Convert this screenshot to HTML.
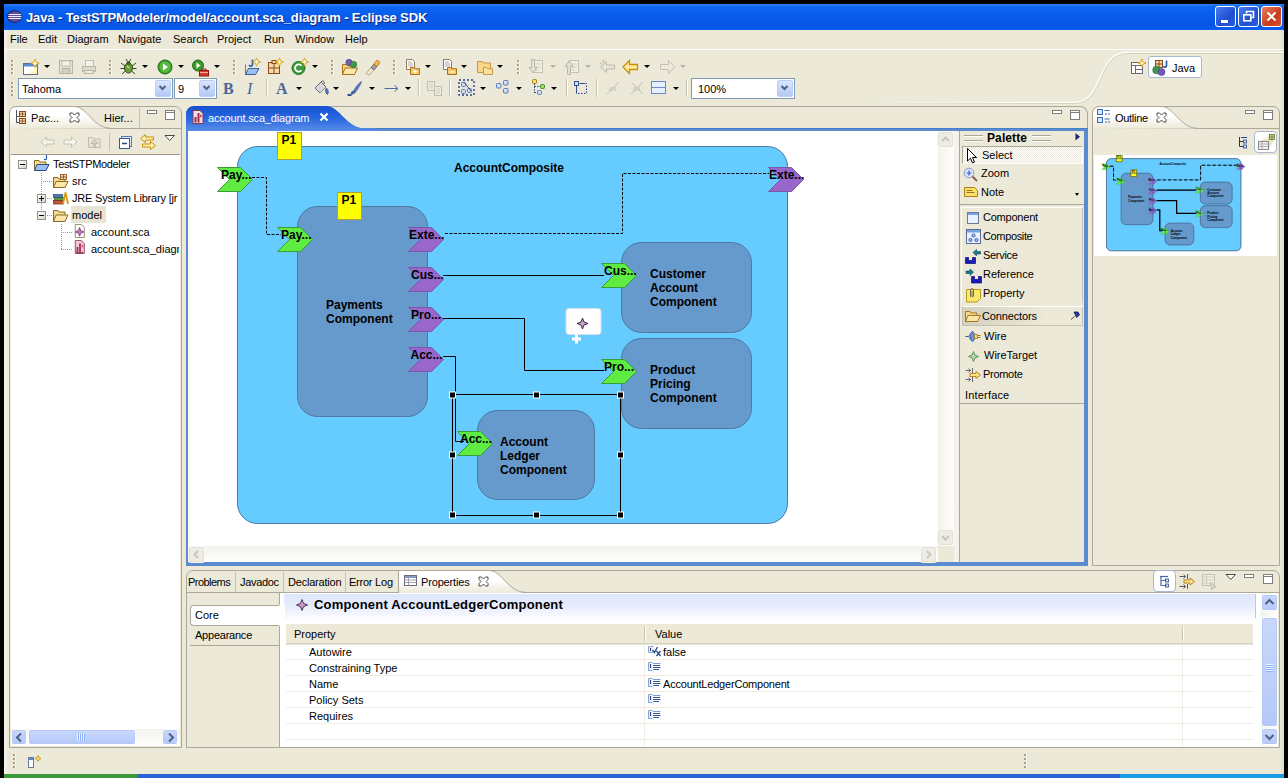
<!DOCTYPE html>
<html>
<head>
<meta charset="utf-8">
<title>Java - Eclipse SDK</title>
<style>
*{box-sizing:border-box;margin:0;padding:0}
html,body{width:1288px;height:778px;overflow:hidden;background:#000}
body{position:relative;font-family:"Liberation Sans",sans-serif;font-size:11px;color:#000}
.abs{position:absolute}
#win{position:absolute;left:4px;top:4px;width:1280px;height:770px;background:#ece9d8}
#title{position:absolute;left:0;top:0;width:1280px;height:26px;background:linear-gradient(#2f80f6 0,#0d66f2 12%,#085cec 45%,#0656e4 80%,#0a5ef0 100%)}
#title .txt{position:absolute;left:22px;top:6px;letter-spacing:-0.11px;font-weight:bold;font-size:13px;color:#fff;white-space:nowrap;text-shadow:1px 1px 0 #0a2a80}
.wb{position:absolute;top:2px;width:21px;height:21px;border:1px solid #fff;border-radius:3px;background:linear-gradient(135deg,#4a7ef0,#1f4fd0 60%,#2a5ce0)}
.wb.c{background:linear-gradient(135deg,#e8825e,#c93a1c 60%,#d9502c)}
#menu{position:absolute;left:0;top:26px;width:1280px;height:20px}
#menu span{position:absolute;top:3px;font-size:11px;white-space:nowrap}
.t{position:absolute;white-space:nowrap;font-size:11px;line-height:13px}
</style>
</head>
<body>
<div id="win">
  <div id="title">
    <svg class="abs" style="left:3px;top:6px" width="15" height="13" viewBox="0 0 15 13"><ellipse cx="7.500" cy="6.500" rx="7" ry="6" fill="#3a3478" stroke="#1a1a50" stroke-width=".8"/><ellipse cx="8" cy="6.500" rx="6" ry="5.300" fill="#5a50a0"/><path d="M1.500 4.500h12.500M1 6.500h13.500M1.500 8.500h12.500" stroke="#f0ecfa" stroke-width="1.100"/></svg>
    <div class="txt">Java - TestSTPModeler/model/account.sca_diagram - Eclipse SDK</div>
    <div class="wb" style="left:1211px"><div class="abs" style="left:5px;top:13px;width:7px;height:3px;background:#fff"></div></div>
    <div class="wb" style="left:1234px"><svg class="abs" style="left:3px;top:3px" width="13" height="13"><path d="M4.5 3.5v-2h7v6h-2" fill="none" stroke="#fff" stroke-width="1.6"/><rect x="1.8" y="4.8" width="7" height="6" fill="none" stroke="#fff" stroke-width="1.6"/></svg></div>
    <div class="wb c" style="left:1257px"><svg class="abs" style="left:3px;top:3px" width="13" height="13"><path d="M2.5 2.5l8 8M10.5 2.5l-8 8" stroke="#fff" stroke-width="2"/></svg></div>
  </div>
  <div class="abs" style="left:0;top:26px;width:3px;height:744px;background:#f3f1e6"></div><div class="abs" style="left:1277px;top:26px;width:3px;height:744px;background:#e3dfce"></div>
  <div id="menu">
    <span style="left:6px">File</span><span style="left:34px">Edit</span><span style="left:63px">Diagram</span><span style="left:114px">Navigate</span><span style="left:169px">Search</span><span style="left:213px">Project</span><span style="left:260px">Run</span><span style="left:291px">Window</span><span style="left:341px">Help</span>
  </div>

  <!-- perspective curve + coolbar lines -->
  <svg class="abs" style="left:0;top:44px" width="1280" height="60" viewBox="0 0 1280 60">
    <defs><linearGradient id="fade" gradientUnits="userSpaceOnUse" x1="860" y1="0" x2="1040" y2="0"><stop offset="0" stop-color="#fff" stop-opacity="0"/><stop offset="1" stop-color="#fff" stop-opacity="1"/></linearGradient>
    <linearGradient id="fade2" gradientUnits="userSpaceOnUse" x1="860" y1="0" x2="1040" y2="0"><stop offset="0" stop-color="#d8d2bd" stop-opacity="0"/><stop offset="1" stop-color="#d8d2bd" stop-opacity="1"/></linearGradient></defs>
    <path d="M0 1.500H1280" stroke="#fff" stroke-width="1" opacity=".85"/>
    <path d="M860 54.500H1070C1100 54.500 1092 4.500 1122 4.500H1280" fill="none" stroke="url(#fade)" stroke-width="1.300"/>
    <path d="M860 55.500H1071C1101 55.500 1093 5.500 1123 5.500H1280" fill="none" stroke="url(#fade2)" stroke-width="1"/>
  </svg>
  <style>
    .grip{position:absolute;width:3px;height:15px;background:linear-gradient(90deg,#a5a28f 0,#a5a28f 2px,#fff 2px) ;-webkit-mask:repeating-linear-gradient(#000 0,#000 2px,transparent 2px,transparent 4px);mask:repeating-linear-gradient(#000 0,#000 2px,transparent 2px,transparent 4px)}
    .dd{position:absolute;width:0;height:0;border-left:3px solid transparent;border-right:3px solid transparent;border-top:3px solid #000}
    .dd.dis{border-top-color:#b5b2a0}
    .sep{position:absolute;width:1px;height:18px;background:#c5c2b2;box-shadow:1px 0 0 #fff}
    .combo{position:absolute;height:21px;background:#fff;border:1px solid #7f9db9}
    .combo .btn{position:absolute;right:1px;top:1px;width:16px;height:17px;border-radius:2px;background:linear-gradient(#dbe6fd,#b4c8f6);border:1px solid #b8cdf8}
    .combo .txt{position:absolute;left:3px;top:4px;font-size:11px}
  </style>
  <div id="tb1">
    <div class="grip" style="left:7px;top:56px"></div>
    <!-- new -->
    <svg class="abs" style="left:18px;top:55px" width="18" height="17"><defs><linearGradient id="ny" x1="0" y1="0" x2="1" y2="1"><stop offset=".5" stop-color="#fff"/><stop offset="1" stop-color="#ffe88a"/></linearGradient></defs><rect x="1.500" y="4.500" width="14" height="11" fill="url(#ny)" stroke="#5a6f9c"/><rect x="2" y="5" width="13" height="2.500" fill="#5a8ad8"/><path d="M13 0l1.200 3 3 1.200-3 1.200L13 8.500l-1.200-3.100-3-1.200 3-1.200z" fill="#fffbd0" stroke="#d8a010" stroke-width=".9"/></svg>
    <div class="dd" style="left:40px;top:61px"></div>
    <!-- save disabled -->
    <svg class="abs" style="left:54px;top:55px" width="16" height="16"><rect x="1.5" y="1.5" width="13" height="13" fill="#e2dfd0" stroke="#b9b6a6"/><rect x="4" y="2" width="8" height="5" fill="#f4f2ea" stroke="#c4c1b2"/><rect x="4.5" y="9.5" width="7" height="5" fill="#d2cfc0" stroke="#b9b6a6"/></svg>
    <svg class="abs" style="left:77px;top:55px" width="16" height="16"><rect x="4.5" y="1.5" width="8" height="6" fill="#f4f2ea" stroke="#c0bdae"/><rect x="1.5" y="7.5" width="13" height="5" fill="#dedbcc" stroke="#b9b6a6"/><rect x="3.5" y="11.5" width="9" height="3" fill="#ece9d8" stroke="#b9b6a6"/></svg>
    <div class="grip" style="left:105px;top:56px"></div>
    <!-- debug -->
    <svg class="abs" style="left:116px;top:54px" width="17" height="18"><ellipse cx="8.5" cy="10" rx="4" ry="5" fill="#6a9a3a" stroke="#2f4d1a"/><circle cx="8.5" cy="5" r="2" fill="#3e5e22"/><path d="M1 5l4 3M16 5l-4 3M0.5 10.5h4M16.5 10.500h-4M2 16l3.500-3M15 16l-3.500-3M6 1l1.500 2.500M11 1L9.500 3.500" stroke="#2f4d1a" stroke-width="1" fill="none"/><path d="M7 8l2 2" stroke="#c8e89a" stroke-width="1.2"/></svg>
    <div class="dd" style="left:138px;top:61px"></div>
    <!-- run -->
    <svg class="abs" style="left:153px;top:55px" width="16" height="16"><circle cx="8" cy="8" r="7" fill="#3c9a2c" stroke="#1f6a18"/><circle cx="8" cy="8" r="5.500" fill="#58b840"/><path d="M6 4.500l5 3.500-5 3.500z" fill="#fff"/></svg>
    <div class="dd" style="left:174px;top:61px"></div>
    <!-- ext tools -->
    <svg class="abs" style="left:187px;top:54px" width="20" height="20"><circle cx="7" cy="7.500" r="5.500" fill="#3c9a2c" stroke="#1f6a18"/><path d="M5.500 4.500l4 3-4 3z" fill="#fff"/><rect x="8.500" y="12.500" width="9" height="5.500" fill="#d83a2a" stroke="#8a1a10"/><path d="M11 12.500v-1.500h4v1.500" stroke="#8a1a10" fill="none"/><rect x="9" y="14" width="8" height="1" fill="#f4b0a0"/></svg>
    <div class="dd" style="left:210px;top:61px"></div>
    <div class="grip" style="left:229px;top:56px"></div>
    <!-- new java project -->
    <svg class="abs" style="left:239px;top:54px" width="18" height="18"><path d="M2.500 6.500v9.500h9" fill="none" stroke="#5a7ab8"/><path d="M2.500 16.500l3-6h10.500l-3.500 6z" fill="#9cc0f0" stroke="#3f5f9a"/><path d="M9.500 1.500v5c0 2-3 2-3.300.3" fill="none" stroke="#2a5aa8" stroke-width="1.700"/><path d="M13.500 0l1.100 2.900 2.900 1.100-2.900 1.100-1.100 2.900-1.100-2.900-2.900-1.100 2.900-1.100z" fill="#fffbd0" stroke="#d8a010" stroke-width=".9"/></svg>
    <svg class="abs" style="left:262px;top:54px" width="18" height="18"><rect x="2.500" y="4.500" width="11" height="11" fill="#f6d9a8" stroke="#8a4a1a"/><path d="M2.500 10h11M8 4.500v11" stroke="#8a4a1a"/><rect x="6" y="2.500" width="4" height="3" fill="#f6d9a8" stroke="#8a4a1a"/><path d="M13.500 0l1.100 2.900 2.900 1.100-2.900 1.100-1.100 2.900-1.100-2.900-2.900-1.100 2.900-1.100z" fill="#fffbd0" stroke="#d8a010" stroke-width=".9"/></svg>
    <svg class="abs" style="left:287px;top:54px" width="18" height="18"><circle cx="7.500" cy="10" r="6.500" fill="#3c9a3c" stroke="#1f6a22"/><path d="M10.500 7.800a3.600 3.600 0 1 0 0 4.400" fill="none" stroke="#fff" stroke-width="1.800"/><path d="M13.500 0l1.100 2.900 2.900 1.100-2.900 1.100-1.100 2.900-1.100-2.900-2.900-1.100 2.900-1.100z" fill="#fffbd0" stroke="#d8a010" stroke-width=".9"/></svg>
    <div class="dd" style="left:308px;top:61px"></div>
    <div class="grip" style="left:327px;top:56px"></div>
    <!-- open type -->
    <svg class="abs" style="left:337px;top:54px" width="18" height="18"><path d="M1.500 6.500h5l1 1.500h6v8.500h-12z" fill="#f8d68a" stroke="#a8741a"/><path d="M1.500 16.500l2.500-6.500h12.500l-3 6.500z" fill="#fbe6a8" stroke="#a8741a"/><circle cx="8" cy="4.500" r="3.200" fill="#7a5ab8" stroke="#4a3a88" stroke-width=".6"/><circle cx="12.500" cy="6.500" r="3.200" fill="#3c9a4c" stroke="#1f6a2a" stroke-width=".6"/></svg>
    <svg class="abs" style="left:360px;top:54px" width="18" height="18"><path d="M2 15.500l5-6 3 2.500-5 5z" fill="#f4ead0" stroke="#a89868" stroke-width=".8"/><path d="M7 9.500l3-3.500 3 2.500-3 3.500z" fill="#a0a0a8" stroke="#606068" stroke-width=".8"/><path d="M10 6l2.500-3.500c1-1 4 1.500 3 3L13 8.500z" fill="#f4b848" stroke="#a8741a" stroke-width=".8"/></svg>
    <div class="grip" style="left:389px;top:56px"></div>
    <svg class="abs" style="left:400px;top:54px" width="18" height="18"><path d="M2.500 1.500h6l2 2v8h-8z" fill="#fff" stroke="#8a7a58"/><path d="M4 4h4M4 6h5M4 8h5" stroke="#9a90a0" stroke-width=".8"/><path d="M6.500 9.500h3l1 1.200h5v5.800h-9z" fill="#f8c868" stroke="#a8741a"/><path d="M9 13.500h4M11 11.500v4" stroke="#fff" stroke-width="1.200"/></svg>
    <div class="dd" style="left:421px;top:61px"></div>
    <svg class="abs" style="left:437px;top:54px" width="18" height="18"><path d="M2.500 1.500h6l2 2v8h-8z" fill="#fff" stroke="#8a7a58"/><path d="M4 4h4M4 6h5M4 8h5" stroke="#9a90a0" stroke-width=".8"/><path d="M6.500 9.500h3l1 1.200h5v5.800h-9z" fill="#f8c868" stroke="#a8741a"/><path d="M8.500 14h5" stroke="#fff" stroke-width="1.200"/></svg>
    <div class="dd" style="left:457px;top:61px"></div>
    <svg class="abs" style="left:472px;top:54px" width="18" height="18"><path d="M1.500 3.500h5l1 1.500h7v9.500h-13z" fill="#f8d68a" stroke="#c8983a"/><path d="M7.500 9.500h3l1 1.200h5v5.800h-9z" fill="#fbe0a0" stroke="#c8983a"/></svg>
    <div class="dd" style="left:493px;top:61px"></div>
    <div class="grip" style="left:513px;top:56px"></div>
    <!-- disabled next/prev annotation -->
    <svg class="abs" style="left:524px;top:54px" width="17" height="18"><rect x="5.500" y="2.500" width="9" height="12" fill="#f2f0e6" stroke="#c4c1b2"/><path d="M7 6h6M7 9h6M7 12h4" stroke="#d0cdbf"/><path d="M3.500 1.500h3v8h2.500l-4 5.500-4-5.500h2.500z" fill="#e4e1d2" stroke="#bcb9a9"/></svg>
    <div class="dd dis" style="left:546px;top:61px"></div>
    <svg class="abs" style="left:560px;top:54px" width="17" height="18"><rect x="5.500" y="2.500" width="9" height="12" fill="#f2f0e6" stroke="#c4c1b2"/><path d="M7 6h6M7 9h6M7 12h4" stroke="#d0cdbf"/><path d="M3.500 16.500h3v-8h2.500l-4-5.500-4 5.500h2.500z" fill="#e4e1d2" stroke="#bcb9a9"/></svg>
    <div class="dd dis" style="left:581px;top:61px"></div>
    <svg class="abs" style="left:595px;top:55px" width="17" height="16"><path d="M7.500 2.500l-6 5.500 6 5.500v-3.500h8v-4h-8z" fill="#e8e5d6" stroke="#bcb9a9"/><path d="M3 2l1.500 2M5 0.500v2.500M1 4l2 1" stroke="#bcb9a9"/></svg>
    <svg class="abs" style="left:618px;top:55px" width="17" height="16"><path d="M7.500 1.500l-6.500 6.500 6.500 6.500v-4h8v-5h-8z" fill="#ffe89a" stroke="#c8900a" stroke-width="1.300"/></svg>
    <div class="dd" style="left:640px;top:61px"></div>
    <svg class="abs" style="left:655px;top:55px" width="17" height="16"><path d="M9.500 1.500l6.500 6.500-6.500 6.500v-4h-8v-5h8z" fill="#ebe8da" stroke="#c4c1b2"/></svg>
    <div class="dd dis" style="left:676px;top:61px"></div>
  </div>

  <div id="tb2" class="abs" style="left:0;top:0px">
    <div class="grip" style="left:7px;top:78px"></div>
    <div class="combo" style="left:14px;top:74px;width:155px"><div class="txt">Tahoma</div><div class="btn"><svg width="13" height="14" class="abs" style="left:0;top:0"><path d="M3.500 5l3 3 3-3" fill="none" stroke="#4d6185" stroke-width="2"/></svg></div></div>
    <div class="combo" style="left:170px;top:74px;width:43px"><div class="txt">9</div><div class="btn"><svg width="13" height="14" class="abs" style="left:0;top:0"><path d="M3.500 5l3 3 3-3" fill="none" stroke="#4d6185" stroke-width="2"/></svg></div></div>
    <div class="abs" style="left:219px;top:76px;font-family:'Liberation Serif',serif;font-weight:bold;font-size:16px;color:#4a6596;line-height:18px">B</div>
    <div class="abs" style="left:243px;top:76px;font-family:'Liberation Serif',serif;font-style:italic;font-size:16px;color:#4a6596;line-height:18px">I</div>
    <div class="sep" style="left:262px;top:75px"></div>
    <div class="abs" style="left:272px;top:76px;font-family:'Liberation Serif',serif;font-weight:bold;font-size:16px;color:#4a6596;line-height:18px">A</div>
    <div class="dd" style="left:292px;top:83px"></div>
    <!-- bucket -->
    <svg class="abs" style="left:309px;top:76px" width="17" height="17"><g transform="translate(17 0) scale(-1 1)"><path d="M4 7l5-5 6 6-5 5z" fill="#d8d8dc" stroke="#5a5a62" stroke-width=".9"/><path d="M4 7l6 6" stroke="#8a8a92"/><path d="M3.500 8c-2 2-2.500 5-1 6.500 1.500-.5 2-3 2-5z" fill="#4a78c8" stroke="#2a4888" stroke-width=".6"/><path d="M9 2c-1.500-2 -4 -1 -3 2" fill="none" stroke="#5a5a62"/></g></svg>
    <div class="dd" style="left:329px;top:83px"></div>
    <!-- brush -->
    <svg class="abs" style="left:343px;top:76px" width="17" height="17"><path d="M14.500 1.500c-3 2-6 5.500-7.500 9l2 1c2-3 4.500-6.500 5.500-10z" fill="#5a80c8" stroke="#34508a" stroke-width=".7"/><path d="M7 10.500c-2 0-3 1.500-3.500 4 2 .3 4.500-.5 5.500-3z" fill="#46649c"/><rect x="0.500" y="14" width="4" height="2" fill="#34508a"/></svg>
    <div class="dd" style="left:365px;top:83px"></div>
    <svg class="abs" style="left:380px;top:80px" width="16" height="9"><path d="M0.500 4.500h13M10.500 1.500l3.500 3-3.500 3" fill="none" stroke="#4a6aa8" stroke-width="1"/></svg>
    <div class="dd" style="left:401px;top:83px"></div>
    <div class="sep" style="left:414px;top:75px"></div>
    <svg class="abs" style="left:422px;top:76px" width="17" height="17"><rect x="1.500" y="1.500" width="7" height="9" fill="#f0eee4" stroke="#c0bdae"/><rect x="8.500" y="6.500" width="7" height="9" fill="#f0eee4" stroke="#c0bdae"/><path d="M3 4h4M3 6h4M3 8h4M10 9h4M10 11h4M10 13h4" stroke="#cfccbd"/></svg>
    <div class="sep" style="left:445px;top:75px"></div>
    <!-- select all -->
    <svg class="abs" style="left:454px;top:75px" width="18" height="18"><rect x="1" y="1" width="15" height="15" fill="none" stroke="#2a3f88" stroke-width="1.400" stroke-dasharray="2 2"/><rect x="3.500" y="3.500" width="4" height="4" rx="1" fill="#c8dcf8" stroke="#5a7ab8"/><rect x="9.500" y="9.500" width="4" height="4" rx="1" fill="#c8dcf8" stroke="#5a7ab8"/><rect x="3.500" y="10.500" width="4" height="4" rx="1" fill="#c8dcf8" stroke="#5a7ab8"/><path d="M6 3l7 9" stroke="#3a4f98"/></svg>
    <div class="dd" style="left:476px;top:83px"></div>
    <svg class="abs" style="left:491px;top:75px" width="16" height="16"><rect x="1.500" y="4.500" width="4.500" height="4.500" rx="1" fill="#cfe0f8" stroke="#5a7ab8"/><rect x="8.500" y="1.500" width="4.500" height="4.500" rx="1" fill="#cfe0f8" stroke="#5a7ab8"/><rect x="8.500" y="9.500" width="4.500" height="4.500" rx="1" fill="#cfe0f8" stroke="#5a7ab8"/></svg>
    <div class="dd" style="left:512px;top:83px"></div>
    <svg class="abs" style="left:526px;top:74px" width="17" height="18"><rect x="2.500" y="1.500" width="4" height="4" rx="1" fill="#fbd668" stroke="#a8801a"/><rect x="10.500" y="6.500" width="4" height="4" rx="1" fill="#98d868" stroke="#4a8a2a"/><rect x="7.500" y="12.500" width="4" height="4" rx="1" fill="#cfe0f8" stroke="#5a7ab8"/><path d="M4.500 6v9M4.500 8.500h5.500M4.500 14.500h3" fill="none" stroke="#34508a" stroke-dasharray="1.500 1"/></svg>
    <div class="dd" style="left:547px;top:83px"></div>
    <div class="sep" style="left:562px;top:75px"></div>
    <svg class="abs" style="left:569px;top:76px" width="16" height="16"><rect x="3.500" y="3.500" width="10" height="10" fill="none" stroke="#2a3f88" stroke-dasharray="1.500 1.500"/><rect x="1.500" y="1.500" width="4" height="4" fill="#cfe0f8" stroke="#34508a"/><path d="M7 3.500h5M3.500 7v5" stroke="#34508a"/></svg>
    <div class="sep" style="left:592px;top:75px"></div>
    <svg class="abs" style="left:600px;top:75px" width="18" height="18"><path d="M3 15L15 3" stroke="#d2cfc0" stroke-width="1.300"/><path d="M6 8v4M8.500 8v4M11 8v4" stroke="#c4c1b2"/></svg>
    <svg class="abs" style="left:624px;top:75px" width="18" height="18"><path d="M3 15L15 3M4 4l11 11" stroke="#d2cfc0" stroke-width="1.300"/><path d="M6 8v4M8.500 8v4M11 8v4" stroke="#c4c1b2"/></svg>
    <svg class="abs" style="left:647px;top:77px" width="16" height="14"><rect x="0.500" y="0.500" width="14" height="12" fill="#e4f0ff" stroke="#6a8ac8"/><path d="M0.500 6.500h14" stroke="#6a8ac8"/></svg>
    <div class="dd" style="left:669px;top:83px"></div>
    <div class="sep" style="left:682px;top:75px"></div>
    <div class="combo" style="left:687px;top:74px;width:104px"><div class="txt" style="left:6px">100%</div><div class="btn"><svg width="13" height="14" class="abs" style="left:0;top:0"><path d="M3.500 5l3 3 3-3" fill="none" stroke="#4d6185" stroke-width="2"/></svg></div></div>
  </div>
  <!-- perspective switcher -->
  <svg class="abs" style="left:1126px;top:55px" width="16" height="16"><rect x="1.500" y="3.500" width="11" height="11" fill="#fff" stroke="#6a6a72"/><path d="M1.500 6.500h11M5.500 6.500v8M5.500 10.500h7" stroke="#6a6a72"/><path d="M12 0l1.100 2.900 2.900 1.100-2.900 1.100-1.100 2.900-1.100-2.900-2.900-1.100 2.900-1.100z" fill="#fffbd0" stroke="#d8a010" stroke-width=".9"/></svg>
  <div class="abs" style="left:1144px;top:52px;width:54px;height:22px;border:1px solid #a9b8d0;border-radius:3px;background:#fff"></div>
  <svg class="abs" style="left:1148px;top:55px" width="17" height="17"><rect x="3.500" y="1.500" width="7" height="7" fill="#f6d9a8" stroke="#8a4a1a"/><path d="M3.500 5h7M7 1.500v7" stroke="#8a4a1a"/><circle cx="4.500" cy="11" r="3.800" fill="#3c9a4c" stroke="#1f6a2a" stroke-width=".6"/><circle cx="9.500" cy="13" r="3.500" fill="#7a5ab8" stroke="#4a3a88" stroke-width=".6"/><path d="M14.500 1.500v5c0 2-2.500 2-3 .5" fill="none" stroke="#2a5aa8" stroke-width="1.700"/></svg>
  <div class="t" style="left:1168px;top:58px">Java</div>


  <style>
    .folder{position:absolute;border:1px solid #aca899;border-radius:7px 7px 0 0;background:#ece9d8}
    .mm{position:absolute;width:10px;height:4px;border:1px solid #7f7f7f;background:#fff;border-top-width:1px}
    .mx{position:absolute;width:10px;height:10px;border:1px solid #7f7f7f;background:#fff}.mx:after{content:"";position:absolute;left:0;top:1px;width:8px;height:1px;background:#7f7f7f}
    .pm{position:absolute;width:9px;height:9px;border:1px solid #919191;background:linear-gradient(135deg,#fff,#d8d4c4)}
    .pm:before{content:"";position:absolute;left:1px;top:3px;width:5px;height:1px;background:#000}
    .pm.plus:after{content:"";position:absolute;left:3px;top:1px;width:1px;height:5px;background:#000}
    .dotv{position:absolute;width:1px;background:repeating-linear-gradient(#9a9a9a 0,#9a9a9a 1px,transparent 1px,transparent 2px)}
    .doth{position:absolute;height:1px;background:repeating-linear-gradient(90deg,#9a9a9a 0,#9a9a9a 1px,transparent 1px,transparent 2px)}
    .sbtn{position:absolute;width:17px;height:17px;border:1px solid #fff;border-radius:3px;background:linear-gradient(#c9d8fc,#b5c9f8);box-shadow:inset 0 0 0 1px #b4c8f6}
  </style>
  <!-- LEFT: package explorer; coords relative to #win (page x-4,y-4) -->
  <div class="folder" style="left:5px;top:102px;width:173px;height:642px"></div>
  <div class="abs" style="left:7px;top:151px;width:169px;height:591px;background:#fff"></div>
  <div class="abs" style="left:6px;top:124px;width:171px;height:1px;background:#aca899"></div>
  <div class="abs" style="left:7px;top:150px;width:169px;height:1px;background:#9d9a8a"></div>
  <!-- active tab shape -->
  <svg class="abs" style="left:5px;top:102px" width="120" height="23" viewBox="0 0 120 23"><path d="M0.500 23V7a6.500 6.500 0 0 1 6.500-6.500H66c12 0 18 22 36 22H120" fill="url(#tabg)" stroke="none"/><defs><linearGradient id="tabg" x1="0" y1="0" x2="0" y2="1"><stop offset="0" stop-color="#fff"/><stop offset=".4" stop-color="#fff"/><stop offset="1" stop-color="#ece9d8"/></linearGradient></defs><path d="M66 .5c12 0 18 22 36 22" fill="none" stroke="#aca899"/><path d="M0.500 23V7a6.500 6.500 0 0 1 6.500-6.500H66" fill="none" stroke="#aca899"/><rect x="1" y="12" width="90" height="11" fill="url(#tg)"/><defs><linearGradient id="tg" x1="0" y1="0" x2="0" y2="1"><stop offset="0" stop-color="#fff" stop-opacity="0"/><stop offset="1" stop-color="#ece9d8" stop-opacity="0"/></linearGradient></defs></svg>
  <svg class="abs" style="left:11px;top:106px" width="12" height="15"><path d="M1.500 0v13M1.500 6.500h3M1.500 12.500h3" stroke="#555" fill="none"/><rect x="4.500" y="1.500" width="6" height="5" fill="#f6d9a8" stroke="#8a4a1a"/><rect x="4.500" y="8.500" width="6" height="5" fill="#f6d9a8" stroke="#8a4a1a"/><path d="M7.500 1.500v5M4.500 4h6M7.500 8.500v5M4.500 11h6" stroke="#8a4a1a" stroke-width=".8"/></svg>
  <div class="t" style="left:27px;top:108px">Pac...</div>
  <svg class="abs" style="left:65px;top:108px" width="11" height="11"><path d="M1 1h2.500l2 2 2-2H10v2.500l-2 2 2 2V10H7.500l-2-2-2 2H1V7.500l2-2-2-2z" fill="#fff" stroke="#4a4a4a" stroke-width="1"/></svg>
  <div class="t" style="left:100px;top:108px">Hier...</div>
  <div class="abs" style="left:135px;top:104px;width:1px;height:20px;background:#c5c2b2"></div>
  <div class="mm" style="left:143px;top:106px"></div>
  <div class="mx" style="left:161px;top:106px"></div>
  <!-- view toolbar -->
  <svg class="abs" style="left:36px;top:132px" width="16" height="12"><path d="M6.500 1l-5.500 5 5.500 5v-3h7.500v-4H6.500z" fill="#f6f4ec" stroke="#c4c1b2"/></svg>
  <svg class="abs" style="left:59px;top:132px" width="16" height="12"><path d="M8.500 1l5.500 5-5.500 5v-3H1v-4h7.500z" fill="#f6f4ec" stroke="#c4c1b2"/></svg>
  <svg class="abs" style="left:83px;top:130px" width="15" height="15"><path d="M1.500 3.500h4l1 1.500h6.500v8.500h-11.500z" fill="#e8e5d6" stroke="#c0bdae"/><path d="M7.500 6l-3.500 3.500h2.500v3h2v-3H11z" fill="#d8d5c6" stroke="#b6b3a3" stroke-width=".8"/></svg>
  <div class="abs" style="left:105px;top:129px;width:1px;height:18px;background:#c5c2b2"></div>
  <svg class="abs" style="left:114px;top:131px" width="15" height="15"><rect x="3.500" y="1.500" width="10" height="10" fill="#dbe8fb" stroke="#5a7ab8"/><rect x="1.500" y="3.500" width="10" height="10" fill="#fff" stroke="#3a5a98"/><path d="M4 8.500h5" stroke="#2a4888" stroke-width="1.500"/></svg>
  <svg class="abs" style="left:135px;top:129px" width="18" height="18"><path d="M6.500 1.500l-5 4 5 4v-2.500h8v-3h-8z" fill="#fff0b0" stroke="#c8900a"/><path d="M11.500 8.500l5 4-5 4v-2.500h-8v-3h8z" fill="#fff0b0" stroke="#c8900a"/></svg>
  <svg class="abs" style="left:160px;top:131px" width="12" height="7"><path d="M1 .5h9.500l-4.750 5z" fill="#fff" stroke="#4a4a4a" stroke-width="1"/></svg>
  <!-- tree -->
  <div class="dotv" style="left:37px;top:169px;height:42px"></div>
  <div class="doth" style="left:37px;top:177px;width:11px"></div>
  <div class="doth" style="left:43px;top:194px;width:5px"></div>
  <div class="doth" style="left:43px;top:211px;width:5px"></div>
  <div class="dotv" style="left:57px;top:220px;height:26px"></div>
  <div class="doth" style="left:57px;top:228px;width:11px"></div>
  <div class="doth" style="left:57px;top:245px;width:11px"></div>
  <div class="pm" style="left:14px;top:156px"></div>
  <div class="pm plus" style="left:33px;top:190px"></div>
  <div class="pm" style="left:33px;top:207px"></div>
  <!-- project icon -->
  <svg class="abs" style="left:29px;top:151px" width="18" height="17"><path d="M1.500 5.500h4.500l1 1.500h6v8.500h-11.500z" fill="#f8d68a" stroke="#8a6a2a"/><path d="M1.500 15.500l2.500-6h12l-3 6z" fill="#9cc0f0" stroke="#2a4a8a"/><path d="M13.500 0v3.500c0 1.500-2 1.500-2.300.3" fill="none" stroke="#2a5aa8" stroke-width="1.200"/></svg>
  <div class="t" style="left:49px;top:154px;letter-spacing:-0.34px">TestSTPModeler</div>
  <svg class="abs" style="left:48px;top:169px" width="17" height="16"><path d="M1.500 4.500h4.500l1 1.500h6v8.500h-11.500z" fill="#f8d68a" stroke="#8a6a2a"/><path d="M1.500 14.500l2.500-6h12l-3 6z" fill="#fbe6a8" stroke="#8a6a2a"/><rect x="8.500" y="1.500" width="6" height="5" fill="#f6d9a8" stroke="#8a4a1a" stroke-width=".8"/><path d="M11.500 1.500v5M8.500 4h6" stroke="#8a4a1a" stroke-width=".8"/></svg>
  <div class="t" style="left:68px;top:171px">src</div>
  <svg class="abs" style="left:48px;top:186px" width="18" height="16"><rect x="1.500" y="4.500" width="9" height="3" fill="#4a7ab8" stroke="#2a4a78" stroke-width=".7"/><rect x="2.500" y="7.500" width="9" height="3" fill="#5a9a4a" stroke="#2a5a2a" stroke-width=".7"/><rect x="1.500" y="10.500" width="10" height="3.500" fill="#c8583a" stroke="#7a2a1a" stroke-width=".7"/><path d="M11 14L13.500 2.500 16 14" fill="none" stroke="#d89a1a" stroke-width="1.800"/></svg>
  <div class="t" style="left:68px;top:188px;letter-spacing:-0.19px">JRE System Library [jr</div>
  <div class="abs" style="left:67px;top:202px;width:35px;height:17px;background:#e8e4d4"></div>
  <svg class="abs" style="left:48px;top:203px" width="17" height="16"><path d="M1.500 3.500h4.500l1 1.500h6v9.500h-11.500z" fill="#f8d68a" stroke="#8a6a2a"/><path d="M1.500 14.500l2.500-6.500h12l-3 6.500z" fill="#fbe6a8" stroke="#8a6a2a"/></svg>
  <div class="t" style="left:68px;top:205px">model</div>
  <svg class="abs" style="left:70px;top:220px" width="12" height="14" viewBox="0 0 14 16" preserveAspectRatio="none"><path d="M1.500 .5h7l3.500 3.500v11.500h-10.500z" fill="#fff" stroke="#8a7a58"/><path d="M6.500 4l1.500 3.500 3.500 1.500-3.500 1.500-1.500 3.500-1.500-3.500L1.500 9 5 7.500z" fill="#c07ac0" stroke="#6a2a6a" stroke-width=".8"/></svg>
  <div class="t" style="left:87px;top:222px">account.sca</div>
  <svg class="abs" style="left:70px;top:236px" width="12" height="14" viewBox="0 0 14 16" preserveAspectRatio="none"><path d="M1.500 .5h7l3.500 3.500v11.500h-10.500z" fill="#f4c8d8" stroke="#8a3a4a"/><rect x="3" y="8" width="2" height="6" fill="#a02a4a"/><rect x="6" y="4" width="2" height="10" fill="#a02a4a"/><path d="M9 6c2 0 2 2 0 2" fill="none" stroke="#a02a4a"/><path d="M2.500 14.500h8" stroke="#6a1a2a"/></svg>
  <div class="abs" style="left:87px;top:239px;width:88px;height:14px;overflow:hidden"><div class="t" style="left:0;top:0">account.sca_diagram</div></div>
  <!-- h scrollbar -->
  <div class="abs" style="left:7px;top:725px;width:169px;height:16px;background:linear-gradient(#f3f1ec,#fefefb)"></div>
  <div class="sbtn" style="left:7px;top:725px;width:16px;height:16px"><svg width="15" height="15"><path d="M9 3.500l-4 4 4 4" fill="none" stroke="#4d6185" stroke-width="2"/></svg></div>
  <div class="sbtn" style="left:158px;top:725px;width:16px;height:16px"><svg width="15" height="15"><path d="M6 3.500l4 4-4 4" fill="none" stroke="#4d6185" stroke-width="2"/></svg></div>
  <div class="sbtn" style="left:24px;top:725px;width:108px;height:16px"><div class="abs" style="left:48px;top:4px;width:8px;height:7px;background:repeating-linear-gradient(90deg,#eef4fe 0,#eef4fe 1px,#8cb0f8 1px,#8cb0f8 2px)"></div></div>


  <!-- EDITOR (win coords = page-4) -->
  <div class="folder" style="left:182px;top:102px;width:902px;height:459px;border-radius:8px 8px 0 0;border-bottom:none"></div>
  <div class="abs" style="left:182px;top:124px;width:902px;height:438px;background:#5a8ad0"></div>
  <div class="abs" style="left:182px;top:124px;width:902px;height:1px;background:#4a7ec8"></div>
  <svg class="abs" style="left:182px;top:102px" width="190" height="25" viewBox="0 0 190 25"><defs><linearGradient id="bt" x1="0" y1="0" x2="0" y2="1"><stop offset="0" stop-color="#1550d0"/><stop offset=".5" stop-color="#2868e0"/><stop offset="1" stop-color="#5a8ee8"/></linearGradient></defs><path d="M0 25V8a8 8 0 0 1 8-8H140c14 0 20 22.500 40 22.500H190V25z" fill="url(#bt)"/></svg>
  <svg class="abs" style="left:188px;top:106px" width="12" height="14"><path d="M1 .5h7l3 3v10h-10z" fill="#f6dce6" stroke="#8a3a4a"/><rect x="2.500" y="7" width="2" height="5.500" fill="#a02a4a"/><rect x="5.500" y="3" width="2" height="9.500" fill="#a02a4a"/><path d="M8 5c2 0 2 2 0 2" fill="none" stroke="#a02a4a"/></svg>
  <div class="t" style="left:204px;top:108px;color:#fff;letter-spacing:-0.17px">account.sca_diagram</div>
  <svg class="abs" style="left:315px;top:108px" width="10" height="10"><path d="M1.500 1.500l7 7M8.500 1.500l-7 7" stroke="#fff" stroke-width="2.200"/></svg>
  <div class="mm" style="left:1048px;top:106px"></div>
  <div class="mx" style="left:1066px;top:106px"></div>
  <!-- canvas -->
  <div class="abs" style="left:184px;top:127px;width:750px;height:415px;background:#fff"></div>
  <svg class="abs" style="left:184px;top:127px" width="750" height="415" viewBox="188 131 750 415">
    <g id="dg">
    <rect x="237.5" y="146.5" width="550" height="377" rx="20" fill="#66ccff" stroke="#4a7aa5"/>
    <rect x="297.5" y="206.500" width="130" height="210" rx="20" fill="#6699cc" stroke="#4f78a2"/>
    <rect x="621.5" y="242.500" width="130" height="90" rx="20" fill="#6699cc" stroke="#4f78a2"/>
    <rect x="621.5" y="338.500" width="130" height="90" rx="20" fill="#6699cc" stroke="#4f78a2"/>
    <rect x="477.5" y="410.500" width="117" height="89" rx="20" fill="#6699cc" stroke="#4f78a2"/>
    <rect x="277.5" y="132.500" width="24" height="27" fill="#ffff00" stroke="#a8a430"/>
    <rect x="337.5" y="192.500" width="24" height="27" fill="#ffff00" stroke="#a8a430"/>
    <polygon points="217.5,167.5 240.5,167.5 252.5,179.5 240.5,191.5 217.5,191.5 229.5,179.5" fill="#5eec42" stroke="#3f9a3a" stroke-width="1"/>
    <polygon points="277.5,227.5 300.5,227.5 312.5,239.5 300.5,251.5 277.5,251.5 289.5,239.5" fill="#5eec42" stroke="#3f9a3a" stroke-width="1"/>
    <polygon points="408.5,227.5 431.5,227.5 443.5,239.5 431.5,251.5 408.5,251.5 420.5,239.5" fill="#9966cc" stroke="#7a58a8" stroke-width="1"/>
    <polygon points="408.5,267.5 431.5,267.5 443.5,279.5 431.5,291.5 408.5,291.5 420.5,279.5" fill="#9966cc" stroke="#7a58a8" stroke-width="1"/>
    <polygon points="408.5,307.5 431.5,307.5 443.5,319.5 431.5,331.5 408.5,331.5 420.5,319.5" fill="#9966cc" stroke="#7a58a8" stroke-width="1"/>
    <polygon points="408.5,347.5 431.5,347.5 443.5,359.5 431.5,371.5 408.5,371.5 420.5,359.5" fill="#9966cc" stroke="#7a58a8" stroke-width="1"/>
    <polygon points="768.5,167.5 791.5,167.5 803.5,179.5 791.5,191.5 768.5,191.5 780.5,179.5" fill="#9966cc" stroke="#7a58a8" stroke-width="1"/>
    <polygon points="601.5,263.5 624.5,263.5 636.5,275.5 624.5,287.5 601.5,287.5 613.5,275.5" fill="#5eec42" stroke="#3f9a3a" stroke-width="1"/>
    <polygon points="601.5,359.5 624.5,359.5 636.5,371.5 624.5,383.5 601.5,383.5 613.5,371.5" fill="#5eec42" stroke="#3f9a3a" stroke-width="1"/>
    <polygon points="457.5,431.5 480.5,431.5 492.5,443.5 480.5,455.5 457.5,455.5 469.5,443.5" fill="#5eec42" stroke="#3f9a3a" stroke-width="1"/>
    <path d="M252 177.500H266.500V234.500H281" fill="none" stroke="#000" stroke-dasharray="3 1.500"/>
    <path d="M445 233.500H622.500V173.500H769" fill="none" stroke="#000" stroke-dasharray="3 1.500"/>
    <path d="M443 275.500H604" fill="none" stroke="#000"/>
    <path d="M443 318.500H524.500V370.500H604" fill="none" stroke="#000"/>
    <path d="M443 356.500H455.500V441.500H464" fill="none" stroke="#000"/>
    <g font-family="Liberation Sans, sans-serif" font-weight="bold" font-size="12px" fill="#000">
    <text x="281.5" y="144" text-anchor="start">P1</text>
    <text x="341.5" y="204" text-anchor="start">P1</text>
    <text x="454" y="171.5" text-anchor="start">AccountComposite</text>
    <text x="221" y="179" text-anchor="start">Pay...</text>
    <text x="281" y="239" text-anchor="start">Pay...</text>
    <text x="409" y="239" text-anchor="start">Exte...</text>
    <text x="411" y="279" text-anchor="start">Cus...</text>
    <text x="411" y="319" text-anchor="start">Pro...</text>
    <text x="410.5" y="359" text-anchor="start">Acc...</text>
    <text x="769" y="179" text-anchor="start">Exte...</text>
    <text x="604" y="275" text-anchor="start">Cus...</text>
    <text x="604" y="371" text-anchor="start">Pro...</text>
    <text x="460" y="443" text-anchor="start">Acc...</text>
    <text x="326" y="308.5" text-anchor="start">Payments</text>
    <text x="326" y="322.5" text-anchor="start">Component</text>
    <text x="650" y="277.5" text-anchor="start">Customer</text>
    <text x="650" y="291.5" text-anchor="start">Account</text>
    <text x="650" y="305.5" text-anchor="start">Component</text>
    <text x="650" y="373.5" text-anchor="start">Product</text>
    <text x="650" y="387.5" text-anchor="start">Pricing</text>
    <text x="650" y="401.5" text-anchor="start">Component</text>
    <text x="500" y="445.5" text-anchor="start">Account</text>
    <text x="500" y="459.5" text-anchor="start">Ledger</text>
    <text x="500" y="473.5" text-anchor="start">Component</text>
    </g>
    </g>
    <rect x="452.500" y="394.500" width="168" height="121" fill="none" stroke="#000"/>
    <rect x="449.5" y="392" width="6" height="6" fill="#000" stroke="#fff" stroke-width="1"/>
    <rect x="533.5" y="392" width="6" height="6" fill="#000" stroke="#fff" stroke-width="1"/>
    <rect x="617.5" y="392" width="6" height="6" fill="#000" stroke="#fff" stroke-width="1"/>
    <rect x="449.5" y="452" width="6" height="6" fill="#000" stroke="#fff" stroke-width="1"/>
    <rect x="617.5" y="452" width="6" height="6" fill="#000" stroke="#fff" stroke-width="1"/>
    <rect x="449.5" y="512" width="6" height="6" fill="#000" stroke="#fff" stroke-width="1"/>
    <rect x="533.5" y="512" width="6" height="6" fill="#000" stroke="#fff" stroke-width="1"/>
    <rect x="617.5" y="512" width="6" height="6" fill="#000" stroke="#fff" stroke-width="1"/>
    <rect x="566" y="308.500" width="35" height="26" rx="3" fill="#fff" stroke="#d8dde8"/>
    <path d="M582.500 318l1.500 4 4 1.500-4 1.500-1.500 4-1.500-4-4-1.500 4-1.500z" fill="#c8a4c8" stroke="#2a1a3a" stroke-width=".9"/>
    <path d="M576.500 334.500v9M572 339h9" stroke="#fff" stroke-width="3"/>
  </svg>
  <!-- scrollbars (disabled) -->
  <div class="abs" style="left:934px;top:127px;width:16px;height:415px;background:linear-gradient(90deg,#f3f1ec,#fefefb)"></div>
  <div class="abs" style="left:184px;top:542px;width:750px;height:16px;background:linear-gradient(#f3f1ec,#fefefb)"></div>
  <div class="abs" style="left:934px;top:542px;width:16px;height:16px;background:#ece9d8"></div>
  <style>.dbtn{position:absolute;width:15px;height:15px;border:1px solid #e4e1d4;border-radius:2px;background:#eeede5;box-shadow:0 0 0 1px #fbfaf6}</style>
  <div class="dbtn" style="left:934px;top:128px"><svg width="13" height="13"><path d="M3 8l3.500-3.500L10 8" fill="none" stroke="#c9c7ba" stroke-width="2"/></svg></div>
  <div class="dbtn" style="left:934px;top:526px"><svg width="13" height="13"><path d="M3 5l3.500 3.500L10 5" fill="none" stroke="#c9c7ba" stroke-width="2"/></svg></div>
  <div class="dbtn" style="left:185px;top:543px"><svg width="13" height="13"><path d="M8 3l-3.500 3.500L8 10" fill="none" stroke="#c9c7ba" stroke-width="2"/></svg></div>
  <div class="dbtn" style="left:917px;top:543px"><svg width="13" height="13"><path d="M5 3l3.500 3.500L5 10" fill="none" stroke="#c9c7ba" stroke-width="2"/></svg></div>
  <!-- sash + palette -->
  <div class="abs" style="left:950px;top:127px;width:5px;height:431px;background:#f4f2ea"></div>
  <div class="abs" style="left:955px;top:127px;width:125px;height:431px;background:#ece9d8;border-left:1px solid #aca899"></div>

  <!-- PALETTE (win coords) -->
  <div class="abs" style="left:956px;top:127px;width:124px;height:15px;background:#ece9d8"></div>
  <svg class="abs" style="left:959px;top:129px" width="92" height="10"><path d="M1 2.500h19M1 7.500h19M69 2.500h19M69 7.500h19" stroke="#aca899"/><path d="M1 3.500h19M1 8.500h19M69 3.500h19M69 8.500h19" stroke="#fff"/></svg>
  <div class="t" style="left:983px;top:127px;font-weight:bold;font-size:12px;line-height:14px;letter-spacing:.1px">Palette</div>
  <svg class="abs" style="left:1071px;top:129px" width="6" height="8"><path d="M.5 0l4.500 3.750L.5 7.500z" fill="#1a2a6a"/></svg>
  <!-- select row -->
  <div class="abs" style="left:958px;top:142px;width:121px;height:18px;border:1px solid #aca899;border-right-color:#fff;border-bottom-color:#fff;background:repeating-conic-gradient(#fff 0 25%,#ece9d8 0 50%) 0 0/2px 2px"></div>
  <svg class="abs" style="left:962px;top:144px" width="12" height="17"><path d="M1.500 .5v12.500l3-2.800 2 4.800 2-.9-2-4.600h4z" fill="#fff" stroke="#000" stroke-width="1"/></svg>
  <div class="t" style="left:978px;top:145px">Select</div>
  <svg class="abs" style="left:959px;top:163px" width="16" height="16"><circle cx="6" cy="6" r="4.800" fill="#dbe6ff" stroke="#8a9ac8"/><path d="M3.500 6h5M6 3.500v5" stroke="#3a5ac8" stroke-width="1.200"/><path d="M9.500 9.500l4.500 4.500" stroke="#8a5a4a" stroke-width="1.800"/></svg>
  <div class="t" style="left:977px;top:163px">Zoom</div>
  <svg class="abs" style="left:960px;top:183px" width="15" height="11"><path d="M.5 .5h10l3 3v6h-13z" fill="#ffe066" stroke="#a8801a"/><path d="M2.500 3.500h6M2.500 5.500h8" stroke="#8a6a2a" stroke-width=".9"/></svg>
  <div class="t" style="left:977px;top:182px">Note</div>
  <div class="dd" style="left:1071px;top:189px;border-left-width:2.500px;border-right-width:2.500px"></div>
  <div class="abs" style="left:956px;top:200px;width:124px;height:1px;background:#aca899"></div>
  <div class="abs" style="left:957px;top:203px;width:122px;height:96px;border:1px solid #fff;border-right-color:#c5c2b2;border-bottom:none"></div>
  <svg class="abs" style="left:963px;top:208px" width="13" height="13"><rect x=".5" y=".5" width="11" height="11" fill="#eaf2ff" stroke="#6a7a9a"/><rect x="1" y="1" width="10" height="2" fill="#7aa0e0"/></svg>
  <div class="t" style="left:979px;top:207px;letter-spacing:-0.22px">Component</div>
  <svg class="abs" style="left:962px;top:225px" width="15" height="15"><rect x=".5" y=".5" width="14" height="14" fill="#eaf2ff" stroke="#5a6a9a"/><rect x="1" y="1" width="13" height="2.500" fill="#7aa0e0"/><circle cx="7.500" cy="6.500" r="1.600" fill="#9ac0f0" stroke="#2a4a9a" stroke-width=".8"/><circle cx="4.500" cy="11" r="1.600" fill="#9ac0f0" stroke="#2a4a9a" stroke-width=".8"/><circle cx="10.500" cy="11" r="1.600" fill="#9ac0f0" stroke="#2a4a9a" stroke-width=".8"/></svg>
  <div class="t" style="left:979px;top:226px;letter-spacing:-0.36px">Composite</div>
  <svg class="abs" style="left:961px;top:245px" width="16" height="15"><path d="M.5 8.500h3v3h4v-3h3v6h-10z" fill="#1a1ab8" stroke="#0a0a78" stroke-width=".7"/><path d="M8 3.500l3.500-3v2h4v2.500h-4v2z" fill="#1a7a8a" stroke="#0a4a5a" stroke-width=".6"/></svg>
  <div class="t" style="left:979px;top:245px;letter-spacing:-0.30px">Service</div>
  <svg class="abs" style="left:961px;top:264px" width="17" height="16"><path d="M6.500 8.500h3v3h4v-3h3v6.500h-10z" fill="#1a1ab8" stroke="#0a0a78" stroke-width=".7"/><path d="M8.500 4l-3.500-3v2h-4v2.500h4v2z" fill="#1a7a8a" stroke="#0a4a5a" stroke-width=".6"/></svg>
  <div class="t" style="left:979px;top:264px">Reference</div>
  <svg class="abs" style="left:961px;top:282px" width="17" height="17"><path d="M1.500 3.500h14v9l-3.500 3.500h-10.500z" fill="#ffe868" stroke="#b89a1a"/><path d="M5.500 11v-7c0-2 3-2 3 0v6c0 1-1.500 1-1.500 0v-5" fill="none" stroke="#5a5a6a" stroke-width=".9"/></svg>
  <div class="t" style="left:979px;top:283px">Property</div>
  <!-- connectors header -->
  <div class="abs" style="left:958px;top:302px;width:121px;height:20px;border:1px solid #c5c2b2;border-top-color:#fff;background:linear-gradient(90deg,#d4d0c0,#ece9d8 70%)"></div>
  <svg class="abs" style="left:961px;top:304px" width="17" height="15"><path d="M.5 3.500h4.500l1 1.500h6v8.500h-11.500z" fill="#f8d68a" stroke="#a8741a"/><path d="M.5 13.500l2.500-6h12.500l-3 6z" fill="#fbe6a8" stroke="#a8741a"/></svg>
  <div class="t" style="left:978px;top:306px;letter-spacing:-0.14px">Connectors</div>
  <svg class="abs" style="left:1066px;top:307px" width="10" height="9"><path d="M4 1l4 0 1.500 3-3 2.500z" fill="#2a3a9a" stroke="#101a5a" stroke-width=".8"/><path d="M4.500 5.500l-3.500 3" stroke="#444" stroke-width="1"/></svg>
  <svg class="abs" style="left:961px;top:325px" width="17" height="15"><path d="M.5 7.500h3" stroke="#3a5a98"/><path d="M3.500 7.500l3-4h1.500v8h-1.500z" fill="#8ab0e8" stroke="#3a5a98" stroke-width=".8"/><ellipse cx="7.500" cy="7.500" rx="2" ry="5" fill="#6a94d8" stroke="#3a5a98" stroke-width=".8"/><path d="M9.500 5.500h3v4h-3z" fill="#f8d68a" stroke="#a8741a" stroke-width=".8"/><path d="M12.500 6.500h3M12.500 8.500h3" stroke="#a8741a"/></svg>
  <div class="t" style="left:980px;top:326px">Wire</div>
  <svg class="abs" style="left:964px;top:347px" width="12" height="12"><path d="M5.500 .5l1.500 3.500 3.500 1.500-3.500 1.500-1.500 3.500-1.500-3.500L.5 5.500 4 4z" fill="#b4d6a6" stroke="#5a8a5a" stroke-width=".9"/></svg>
  <div class="t" style="left:980px;top:345px">WireTarget</div>
  <svg class="abs" style="left:961px;top:363px" width="17" height="16"><path d="M.500 3.500h5M3.500 1.500l2 2-2 2M7.500 1v5M.500 12.500h5M3.500 10.500l2 2-2 2M7.500 10v5" fill="none" stroke="#5a5a6a" stroke-width=".9"/><path d="M5 6.500h6v-2l4.500 3.500-4.500 3.500v-2h-6z" fill="#ffe28a" stroke="#b07a10" stroke-width=".9"/></svg>
  <div class="t" style="left:979px;top:364px;letter-spacing:-0.29px">Promote</div>
  <div class="t" style="left:961px;top:385px;letter-spacing:0.18px">Interface</div>
  <div class="abs" style="left:956px;top:399px;width:124px;height:1px;background:#aca899"></div>



  <!-- OUTLINE (win coords) -->
  <div class="folder" style="left:1088px;top:102px;width:188px;height:460px"></div>
  <div class="abs" style="left:1089px;top:124px;width:186px;height:1px;background:#aca899"></div>
  <svg class="abs" style="left:1088px;top:102px" width="120" height="23" viewBox="0 0 120 23"><path d="M0.500 23V7a6.500 6.500 0 0 1 6.500-6.500H70c12 0 18 22 36 22H120" fill="url(#tabg)"/><path d="M70 .5c12 0 18 22 36 22" fill="none" stroke="#aca899"/><path d="M0.500 23V7a6.500 6.500 0 0 1 6.500-6.500H70" fill="none" stroke="#aca899"/></svg>
  <svg class="abs" style="left:1093px;top:105px" width="14" height="15"><rect x=".5" y=".5" width="5" height="5" fill="#dbe8fb" stroke="#3a6ab8"/><rect x=".5" y="8.500" width="5" height="5" fill="#dbe8fb" stroke="#3a6ab8"/><path d="M7.500 1.500h5M8 5h2M11 5h2M7.500 10h5M8 13h2M11 13h2" stroke="#3a6ab8"/></svg>
  <div class="t" style="left:1111px;top:108px;letter-spacing:-0.29px">Outline</div>
  <svg class="abs" style="left:1152px;top:108px" width="11" height="11"><path d="M1 1h2.500l2 2 2-2H10v2.500l-2 2 2 2V10H7.500l-2-2-2 2H1V7.500l2-2-2-2z" fill="#fff" stroke="#4a4a4a" stroke-width="1"/></svg>
  <div class="mm" style="left:1241px;top:106px"></div>
  <div class="mx" style="left:1259px;top:106px"></div>
  <svg class="abs" style="left:1234px;top:132px" width="11" height="13"><path d="M1.500 1v9.500h4M1.500 5.500h4" fill="none" stroke="#333"/><rect x="5.500" y="4" width="3" height="3" fill="#cfe0f8" stroke="#2a4888" stroke-width=".8"/><rect x="5.500" y="9" width="3" height="3" fill="#cfe0f8" stroke="#2a4888" stroke-width=".8"/><path d="M3 1.500h6" stroke="#2a4888"/></svg>
  <div class="abs" style="left:1250px;top:127px;width:23px;height:22px;border:1px solid #a9b8d0;border-radius:4px;background:#fff"></div>
  <svg class="abs" style="left:1253px;top:130px" width="18" height="17"><path d="M2 8L12 2h5v4L12 15z" fill="#ebe6c8"/><rect x="1.500" y="7.500" width="10" height="8" fill="#f4f4f4" stroke="#8a8a8a"/><path d="M1.500 10h10M1.500 12.500h10M5 7.500v8" stroke="#9a9a9a" stroke-width=".8"/><rect x="12.500" y=".5" width="5" height="5" fill="#c8e09a" stroke="#6a6a2a" stroke-width=".8"/><path d="M15 .5v5M12.500 3h5" stroke="#6a6a2a" stroke-width=".7"/></svg>
  <div class="abs" style="left:1090px;top:151px;width:183px;height:101px;background:#fff"></div>
  <svg class="abs" style="left:1090px;top:151px" width="184" height="100" viewBox="1094 155 184 100">
    <g transform="translate(1048.4 122.8) scale(0.2445)"><use href="#dg"/>
      <rect x="237.5" y="146.5" width="550" height="377" rx="20" fill="none" stroke="#3f5f80" stroke-width="3"/>
      <rect x="297.5" y="206.500" width="130" height="210" rx="20" fill="none" stroke="#4a6a92" stroke-width="3"/>
      <rect x="621.5" y="242.500" width="130" height="90" rx="20" fill="none" stroke="#4a6a92" stroke-width="3"/>
      <rect x="621.5" y="338.500" width="130" height="90" rx="20" fill="none" stroke="#4a6a92" stroke-width="3"/>
      <rect x="477.5" y="410.500" width="117" height="89" rx="20" fill="none" stroke="#4a6a92" stroke-width="3"/>
      <rect x="277.5" y="132.500" width="24" height="27" fill="none" stroke="#6a6820" stroke-width="3"/>
      <rect x="337.5" y="192.500" width="24" height="27" fill="none" stroke="#6a6820" stroke-width="3"/>
      <path d="M252 177.500H266.500V234.500H281" fill="none" stroke="#000" stroke-width="4" stroke-dasharray="14 8"/>
      <path d="M445 233.500H622.500V173.500H769" fill="none" stroke="#000" stroke-width="4" stroke-dasharray="14 8"/>
      <path d="M443 275.500H604M443 318.500H524.500V370.500H604M443 356.500H455.500V441.500H464" fill="none" stroke="#000" stroke-width="5"/>
    </g>
  </svg>


  <!-- BOTTOM (win coords) -->
  <div class="folder" style="left:182px;top:566px;width:1094px;height:178px"></div>
  <div class="abs" style="left:183px;top:588px;width:1092px;height:1px;background:#aca899"></div>
  <svg class="abs" style="left:394px;top:566px" width="140" height="23" viewBox="0 0 140 23"><path d="M0 23V1H92c12 0 18 22 36 22H140z" fill="url(#tabg)"/><path d="M.500 23V.500M0 .500H92c12 0 18 22 36 22" fill="none" stroke="#aca899"/></svg>
  <div class="t" style="left:184px;top:572px;letter-spacing:-0.53px">Problems</div>
  <div class="abs" style="left:231px;top:568px;width:1px;height:20px;background:#c5c2b2"></div>
  <div class="t" style="left:236px;top:572px;letter-spacing:-0.31px">Javadoc</div>
  <div class="abs" style="left:279px;top:568px;width:1px;height:20px;background:#c5c2b2"></div>
  <div class="t" style="left:284px;top:572px;letter-spacing:-0.21px">Declaration</div>
  <div class="abs" style="left:341px;top:568px;width:1px;height:20px;background:#c5c2b2"></div>
  <div class="t" style="left:345px;top:572px;letter-spacing:-0.23px">Error Log</div>
  <svg class="abs" style="left:400px;top:571px" width="13" height="11"><rect x=".5" y=".5" width="12" height="10" fill="#fff" stroke="#6a6a7a"/><rect x="1" y="1" width="11" height="2" fill="#8a9ac8"/><path d="M1 5h11M1 7.500h11M4.500 3v7.500" stroke="#9a9aaa" stroke-width=".9"/></svg>
  <div class="t" style="left:417px;top:572px;letter-spacing:-0.16px">Properties</div>
  <svg class="abs" style="left:474px;top:572px" width="11" height="11"><path d="M1 1h2.500l2 2 2-2H10v2.500l-2 2 2 2V10H7.500l-2-2-2 2H1V7.500l2-2-2-2z" fill="#fff" stroke="#4a4a4a" stroke-width="1"/></svg>
  <!-- view toolbar right -->
  <div class="abs" style="left:1149px;top:566px;width:23px;height:22px;border:1px solid #a9b8d0;border-radius:4px;background:#fff"></div>
  <svg class="abs" style="left:1155px;top:571px" width="12" height="13"><path d="M2 1v9.500h5M2 5.500h5" fill="none" stroke="#4a6aa8" stroke-width="1.200"/><rect x="6.500" y="4" width="3" height="3" fill="#cfe0f8" stroke="#2a4888" stroke-width=".8"/><rect x="6.500" y="9" width="3" height="3" fill="#cfe0f8" stroke="#2a4888" stroke-width=".8"/><path d="M1 1.500h8" stroke="#4a6aa8" stroke-width="1.200"/></svg>
  <svg class="abs" style="left:1175px;top:569px" width="18" height="17"><path d="M.500 3.500h6M4.500 1.500l2 2-2 2M8.500 1v5M.500 13.500h6M4.500 11.500l2 2-2 2M8.500 11v5" fill="none" stroke="#4a4a5a" stroke-width=".9"/><path d="M5 7h6v-2l4.500 3.500-4.500 3.500v-2h-6z" fill="#ffe28a" stroke="#b07a10" stroke-width=".9"/></svg>
  <svg class="abs" style="left:1198px;top:570px" width="17" height="16"><rect x=".5" y=".5" width="12" height="11" fill="#f2f0e6" stroke="#c4c1b2"/><path d="M.5 3h12M.5 6h12M.5 9h12M4.500 .5v11" stroke="#cfccbd"/><path d="M8 9l6 4-3 .5-1 2.500z" fill="#e4e1d2" stroke="#b6b3a3" stroke-width=".8"/></svg>
  <svg class="abs" style="left:1221px;top:570px" width="12" height="7"><path d="M1 .5h9.500l-4.750 5z" fill="#fff" stroke="#4a4a4a" stroke-width="1"/></svg>
  <div class="mm" style="left:1240px;top:570px"></div>
  <div class="mx" style="left:1259px;top:570px"></div>
  <!-- content -->
  <div class="abs" style="left:275px;top:589px;width:982px;height:154px;background:#fff"></div>
  <div class="abs" style="left:280px;top:590px;width:972px;height:27px;background:linear-gradient(#dfe6fb 0,#e6ecfc 45%,#fff 100%)"></div>
  <div class="abs" style="left:1251px;top:590px;width:1px;height:24px;background:#b9c6ea"></div>
  <svg class="abs" style="left:292px;top:595px" width="12" height="12"><path d="M6 .5l1.600 3.900 3.900 1.600-3.900 1.600L6 11.500 4.400 7.600.5 6l3.900-1.600z" fill="#c89ac8" stroke="#3a2a4a" stroke-width=".9"/></svg>
  <div class="t" style="left:310px;top:593px;font-weight:bold;font-size:13px;line-height:15px;letter-spacing:0.19px">Component AccountLedgerComponent</div>
  <!-- left tabs -->
  <div class="abs" style="left:275px;top:589px;width:1px;height:12px;background:#aca899"></div>
  <div class="abs" style="left:186px;top:601px;width:95px;height:21px;background:#fff;border:1px solid #aca899;border-right:none;border-radius:4px 0 0 4px"></div>
  <div class="abs" style="left:275px;top:601px;width:6px;height:1px;background:#fff"></div>
  <div class="abs" style="left:275px;top:621px;width:6px;height:1px;background:#fff"></div>
  <div class="t" style="left:191px;top:605px">Core</div>
  <div class="t" style="left:191px;top:625px;letter-spacing:-0.23px">Appearance</div>
  <div class="abs" style="left:186px;top:641px;width:90px;height:1px;background:#aca899"></div>
  <div class="abs" style="left:275px;top:622px;width:1px;height:121px;background:#aca899"></div>
  <!-- table -->
  <div class="abs" style="left:282px;top:620px;width:967px;height:20px;background:#ece9d8;border-bottom:1px solid #d6d2c2;box-shadow:0 1px 0 #e6e3d4"></div>
  <div class="abs" style="left:640px;top:622px;width:1px;height:15px;background:#c5c2b2;box-shadow:1px 0 0 #fff"></div>
  <div class="abs" style="left:1178px;top:622px;width:1px;height:15px;background:#c5c2b2;box-shadow:1px 0 0 #fff"></div>
  <div class="t" style="left:290px;top:624px">Property</div>
  <div class="t" style="left:651px;top:624px">Value</div>
  <div class="abs" style="left:282px;top:655px;width:967px;height:1px;background:#f0eee3"></div>
  <div class="abs" style="left:282px;top:671px;width:967px;height:1px;background:#f0eee3"></div>
  <div class="abs" style="left:282px;top:687px;width:967px;height:1px;background:#f0eee3"></div>
  <div class="abs" style="left:282px;top:703px;width:967px;height:1px;background:#f0eee3"></div>
  <div class="abs" style="left:282px;top:719px;width:967px;height:1px;background:#f0eee3"></div>
  <div class="abs" style="left:282px;top:735px;width:967px;height:1px;background:#f0eee3"></div>
  <div class="abs" style="left:640px;top:641px;width:1px;height:102px;background:#f0eee3"></div>
  <div class="abs" style="left:1178px;top:641px;width:1px;height:102px;background:#f0eee3"></div>
  <div class="t" style="left:305px;top:642px">Autowire</div>
  <svg class="abs" style="left:644px;top:642px" width="14" height="11"><path d="M5.500 .5h-5v6h5" fill="#e4ecfc" stroke="#8aa4d4"/><path d="M2.500 2v3" stroke="#2a3f78"/><path d="M4.500 4l2 2.500 3-5.500" fill="none" stroke="#2a4888" stroke-width="1.300"/><path d="M8.500 5l4 5M12.500 5l-4 5" stroke="#2a4888" stroke-width="1.300"/></svg>
  <div class="t" style="left:659px;top:642px">false</div>
  <div class="t" style="left:305px;top:658px">Constraining Type</div>
  <svg class="abs" style="left:644px;top:658px" width="13" height="10"><path d="M4.500 .5h-4v8h4" fill="#e4ecfc" stroke="#8aa4d4"/><path d="M2.500 2v4" stroke="#2a3f78"/><path d="M5 1.500h7.500" stroke="#7a9ad0"/><path d="M5 3.500h7M5 5.500h7.500M5.500 7.500h5.500" stroke="#34508a" stroke-width="1"/></svg>
  <div class="t" style="left:305px;top:674px">Name</div>
  <svg class="abs" style="left:644px;top:674px" width="13" height="10"><path d="M4.500 .5h-4v8h4" fill="#e4ecfc" stroke="#8aa4d4"/><path d="M2.500 2v4" stroke="#2a3f78"/><path d="M5 1.500h7.500" stroke="#7a9ad0"/><path d="M5 3.500h7M5 5.500h7.500M5.500 7.500h5.500" stroke="#34508a" stroke-width="1"/></svg>
  <div class="t" style="left:659px;top:674px;letter-spacing:-0.20px">AccountLedgerComponent</div>
  <div class="t" style="left:305px;top:690px">Policy Sets</div>
  <svg class="abs" style="left:644px;top:690px" width="13" height="10"><path d="M4.500 .5h-4v8h4" fill="#e4ecfc" stroke="#8aa4d4"/><path d="M2.500 2v4" stroke="#2a3f78"/><path d="M5 1.500h7.500" stroke="#7a9ad0"/><path d="M5 3.500h7M5 5.500h7.500M5.500 7.500h5.500" stroke="#34508a" stroke-width="1"/></svg>
  <div class="t" style="left:305px;top:706px">Requires</div>
  <svg class="abs" style="left:644px;top:706px" width="13" height="10"><path d="M4.500 .5h-4v8h4" fill="#e4ecfc" stroke="#8aa4d4"/><path d="M2.500 2v4" stroke="#2a3f78"/><path d="M5 1.500h7.500" stroke="#7a9ad0"/><path d="M5 3.500h7M5 5.500h7.500M5.500 7.500h5.500" stroke="#34508a" stroke-width="1"/></svg>
  <!-- v scrollbar -->
  <div class="abs" style="left:1257px;top:589px;width:17px;height:154px;background:linear-gradient(90deg,#f3f1ec,#fefefb)"></div>
  <div class="sbtn" style="left:1257px;top:590px"><svg width="15" height="15"><path d="M3.500 9l4-4 4 4" fill="none" stroke="#4d6185" stroke-width="2"/></svg></div>
  <div class="sbtn" style="left:1257px;top:724px"><svg width="15" height="15"><path d="M3.500 6l4 4 4-4" fill="none" stroke="#4d6185" stroke-width="2"/></svg></div>
  <div class="sbtn" style="left:1257px;top:613px;height:110px"><div class="abs" style="left:4px;top:46px;width:7px;height:8px;background:repeating-linear-gradient(#eef4fe 0,#eef4fe 1px,#8cb0f8 1px,#8cb0f8 2px)"></div></div>


  <!-- STATUS -->
  <div class="grip" style="left:9px;top:750px"></div>
  <svg class="abs" style="left:24px;top:751px" width="16" height="14"><rect x=".5" y="2.500" width="5" height="10" fill="#fff" stroke="#6a7a9a"/><rect x="1" y="3" width="4" height="2" fill="#5a8ad0"/><path d="M10 .5l1 2 2 1-2 1-1 2-1-2-2-1 2-1z" fill="#ffe066" stroke="#b08a10" stroke-width=".7"/></svg>
  <div class="grip" style="left:1020px;top:750px"></div>

</div>
<div class="abs" style="left:4px;top:774px;width:133px;height:4px;background:#3c9a3c"></div>
<div class="abs" style="left:137px;top:774px;width:983px;height:4px;background:#2a62d8"></div>
<div class="abs" style="left:1120px;top:774px;width:164px;height:4px;background:#1a9be8"></div>
</body>
</html>
